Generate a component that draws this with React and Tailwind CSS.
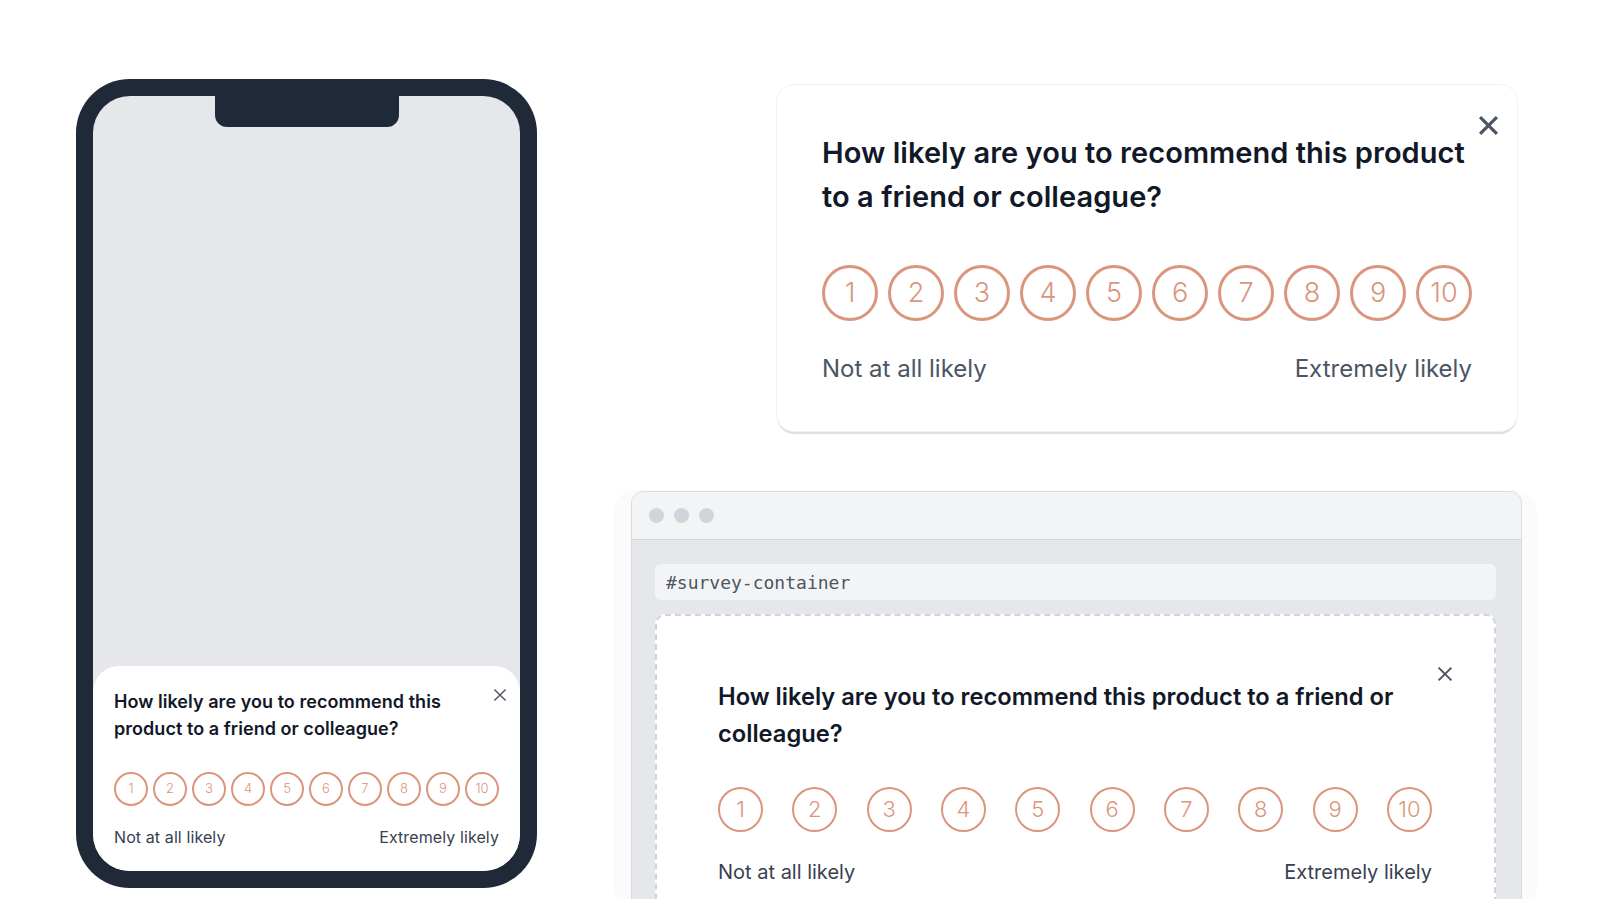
import React from "react";

const NUMS = [1, 2, 3, 4, 5, 6, 7, 8, 9, 10];

function XIcon({ size, stroke, className }) {
  return (
    <svg width={size} height={size} viewBox="0 0 20 20" className={className} fill="none">
      <path d="M2 2 L18 18 M18 2 L2 18" stroke="currentColor" strokeWidth={stroke} strokeLinecap="butt" />
    </svg>
  );
}

function Phone() {
  return (
    <div className="w-[461px] h-[809px] rounded-[54px] bg-[#1f2937] p-[17px]">
      <div className="relative h-full w-full rounded-[37px] bg-[#e5e7eb] overflow-hidden flex flex-col justify-end">
        <div className="absolute top-0 left-[122px] w-[184px] h-[31px] rounded-b-[12px] bg-[#1f2937]" />
        <div className="relative h-[205px] bg-white rounded-t-[26px] px-[21px] pt-[22px]">
          <div className="absolute right-[13px] top-[22px] text-[#4b5563]">
            <XIcon size={14} stroke={2} />
          </div>
          <div className="text-[18px] leading-[27px] font-semibold text-[#111827] whitespace-nowrap tracking-[0.05px]">
            How likely are you to recommend this
            <br />
            product to a friend or colleague?
          </div>
          <div className="mt-[30px] flex justify-between">
            {NUMS.map((n) => (
              <div
                key={n}
                className="w-[34px] h-[34px] rounded-full border-2 border-[#db957d] flex items-center justify-center text-[13px] font-light text-[#db957d]"
              >
                {n}
              </div>
            ))}
          </div>
          <div className="mt-[21px] flex justify-between text-[16px] leading-[20px] tracking-[0.1px] text-[#374151]">
            <span>Not at all likely</span>
            <span>Extremely likely</span>
          </div>
        </div>
      </div>
    </div>
  );
}

function TopCard() {
  return (
    <div className="relative w-[742px] h-[348px] rounded-[18px] bg-white border border-[#f1f1f1] shadow-[0_3px_1px_-1px_rgba(0,0,0,0.13)] pl-[45px] pr-[45px] pt-[46px]">
      <div className="absolute right-[18px] top-[30px] text-[#4b5563]">
        <XIcon size={21} stroke={3} />
      </div>
      <div className="text-[29px] leading-[44px] font-semibold text-[#111827] whitespace-nowrap tracking-[0.05px]">
        How likely are you to recommend this product
        <br />
        to a friend or colleague?
      </div>
      <div className="mt-[46px] flex justify-between">
        {NUMS.map((n) => (
          <div
            key={n}
            className="w-[56px] h-[56px] rounded-full border-[3px] border-[#db957d] flex items-center justify-center text-[27px] font-light text-[#db957d]"
          >
            {n}
          </div>
        ))}
      </div>
      <div className="mt-[33px] flex justify-between text-[24px] leading-[30px] text-[#4b5563]">
        <span>Not at all likely</span>
        <span>Extremely likely</span>
      </div>
    </div>
  );
}

function Browser() {
  return (
    <div className="w-[924px] h-[420px] rounded-[22px] bg-[#fbfbfb] pl-[18px] pr-[15px] pt-[1px]">
      <div className="w-[891px] h-[420px] rounded-t-[12px] border border-[#dcdcdf] bg-[#e5e7eb] overflow-hidden">
        <div className="h-[48px] bg-[#f3f4f6] border-b border-[#d4d4d8] flex items-center gap-[10px] pl-[17px]">
          <div className="w-[15px] h-[15px] rounded-full bg-[#d1d5db]" />
          <div className="w-[15px] h-[15px] rounded-full bg-[#d1d5db]" />
          <div className="w-[15px] h-[15px] rounded-full bg-[#d1d5db]" />
        </div>
        <div className="pl-[23px] pr-[25px] pt-[24px]">
          <div className="h-[36px] rounded-md bg-[#f3f4f6] flex items-center pl-[11px] text-[18px] text-[#4b5563] font-['DejaVu_Sans_Mono',monospace]">
            #survey-container
          </div>
          <div className="relative mt-[14px] h-[320px] rounded-t-[10px] border-2 border-dashed border-[#d1d5db] bg-white pl-[61px] pr-[62px] pt-[62px]">
            <div className="absolute right-[41px] top-[50px] text-[#4b5563]">
              <XIcon size={16} stroke={2.5} />
            </div>
            <div className="text-[23.7px] leading-[37px] font-semibold text-[#111827] whitespace-nowrap">
              How likely are you to recommend this product to a friend or
              <br />
              colleague?
            </div>
            <div className="mt-[35px] flex justify-between">
              {NUMS.map((n) => (
                <div
                  key={n}
                  className="w-[45px] h-[45px] rounded-full border-[2.5px] border-[#db957d] flex items-center justify-center text-[22px] font-light text-[#db957d]"
                >
                  {n}
                </div>
              ))}
            </div>
            <div className="mt-[27px] flex justify-between text-[20px] leading-[26px] text-[#374151]">
              <span>Not at all likely</span>
              <span>Extremely likely</span>
            </div>
          </div>
        </div>
      </div>
    </div>
  );
}

export default function App() {
  return (
    <div className="w-[1598px] h-[899px] overflow-hidden bg-white flex font-['Inter',sans-serif]">
      <div className="pl-[76px] pt-[79px]">
        <Phone />
      </div>
      <div className="ml-[76px] flex flex-col">
        <div className="mt-[84px] ml-[163px]">
          <TopCard />
        </div>
        <div className="mt-[58px]">
          <Browser />
        </div>
      </div>
    </div>
  );
}
